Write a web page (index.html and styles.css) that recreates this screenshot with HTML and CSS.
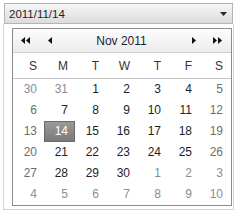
FILE: index.html
```html
<!DOCTYPE html>
<html lang="en">
<head>
    <meta charset="UTF-8">
    <title>Date picker</title>
    <link rel="stylesheet" href="styles.css">
</head>
<body>
    <div class="combo">
        <span class="combo-value">2011/11/14</span>
        <svg class="combo-arrow" width="7" height="4" viewBox="0 0 7 4"><polygon points="0,0 7,0 3.5,4" fill="#2a2a2a"/></svg>
    </div>
    <div class="popup">
        <div class="calendar">
            <div class="cal-header">
                <div class="nav nav-left">
                    <svg width="9" height="7" viewBox="0 0 9 7"><polygon points="4,0 4,7 0,3.5" fill="#111"/><polygon points="9,0 9,7 5,3.5" fill="#111"/></svg>
                    <svg class="nav-single" width="4" height="7" viewBox="0 0 4 7"><polygon points="4,0 4,7 0,3.5" fill="#111"/></svg>
                </div>
                <div class="cal-title">Nov 2011</div>
                <div class="nav nav-right">
                    <svg class="nav-single" width="4" height="7" viewBox="0 0 4 7"><polygon points="0,0 0,7 4,3.5" fill="#111"/></svg>
                    <svg width="9" height="7" viewBox="0 0 9 7"><polygon points="0,0 0,7 4,3.5" fill="#111"/><polygon points="5,0 5,7 9,3.5" fill="#111"/></svg>
                </div>
            </div>
            <div class="dow">
                <span>S</span><span>M</span><span>T</span><span>W</span><span>T</span><span>F</span><span>S</span>
            </div>
            <div class="days">
                <span class="other">30</span><span class="other">31</span><span>1</span><span>2</span><span>3</span><span>4</span><span class="weekend">5</span>
                <span class="weekend">6</span><span>7</span><span>8</span><span>9</span><span>10</span><span>11</span><span class="weekend">12</span>
                <span class="weekend">13</span><span class="selected">14</span><span>15</span><span>16</span><span>17</span><span>18</span><span class="weekend">19</span>
                <span class="weekend">20</span><span>21</span><span>22</span><span>23</span><span>24</span><span>25</span><span class="weekend">26</span>
                <span class="weekend">27</span><span>28</span><span>29</span><span>30</span><span class="other">1</span><span class="other">2</span><span class="other">3</span>
                <span class="other">4</span><span class="other">5</span><span class="other">6</span><span class="other">7</span><span class="other">8</span><span class="other">9</span><span class="other">10</span>
            </div>
        </div>
    </div>
</body>
</html>
```

FILE: styles.css
```css
body {
    margin: 0;
    padding-top: 3px;
    width: 238px;
    height: 213px;
    background-color: #fff;
    font-family: 'Liberation Sans', Arial, sans-serif;
    font-size: 12px;
    color: #1e1e2a;
}
.combo {
    box-sizing: border-box;
    margin-left: 4px;
    width: 229px;
    height: 21px;
    border: 1px solid #b4b4b4;
    background: linear-gradient(#f6f6f6, #dcdcdc);
    display: flex;
    align-items: center;
    justify-content: space-between;
    padding: 0 5px 0 4px;
    position: relative;
    z-index: 1;
}
.combo-value {
    font-size: 11.5px;
    color: #1e1e2a;
}
.combo-arrow {
    margin-top: 1px;
}
.popup {
    box-sizing: border-box;
    margin-left: 3px;
    width: 231px;
    height: 186px;
    border: 1px solid #d2d2de;
    border-top: none;
    padding: 4px 1px 2px 8px;
}
.calendar {
    border: 1px solid #8c8c8c;
    height: 178px;
    box-sizing: border-box;
}
.cal-header {
    display: flex;
    align-items: center;
    height: 23px;
    border-bottom: 1px solid #d0d0d0;
    background: linear-gradient(#fcfcfc, #ececec);
}
.nav {
    display: flex;
    align-items: center;
    width: 40px;
}
.nav-left {
    padding-left: 8px;
}
.nav-left .nav-single {
    margin-left: 18px;
}
.nav-right {
    justify-content: flex-end;
    padding-right: 9px;
}
.nav-right .nav-single {
    margin-right: 17px;
}
.cal-title {
    flex: 1;
    text-align: center;
    font-size: 12px;
    color: #1c1c3a;
}
.dow,
.days {
    display: grid;
    grid-template-columns: repeat(7, 31px);
}
.dow {
    height: 25px;
    border-bottom: 1px solid #c4c4c4;
}
.dow span {
    text-align: right;
    padding-right: 7px;
    line-height: 26px;
    color: #333;
}
.days span {
    box-sizing: border-box;
    height: 21px;
    line-height: 21px;
    text-align: right;
    padding-right: 7px;
    color: #1e1e2a;
}
.days .weekend {
    color: #6e6e6e;
}
.days .other {
    color: #8c8c96;
}
.days .selected {
    background: linear-gradient(#9a9a9a, #7a7a7a);
    border: 1px solid #6a6a6a;
    color: #fff;
    line-height: 19px;
    padding-right: 6px;
}
```
